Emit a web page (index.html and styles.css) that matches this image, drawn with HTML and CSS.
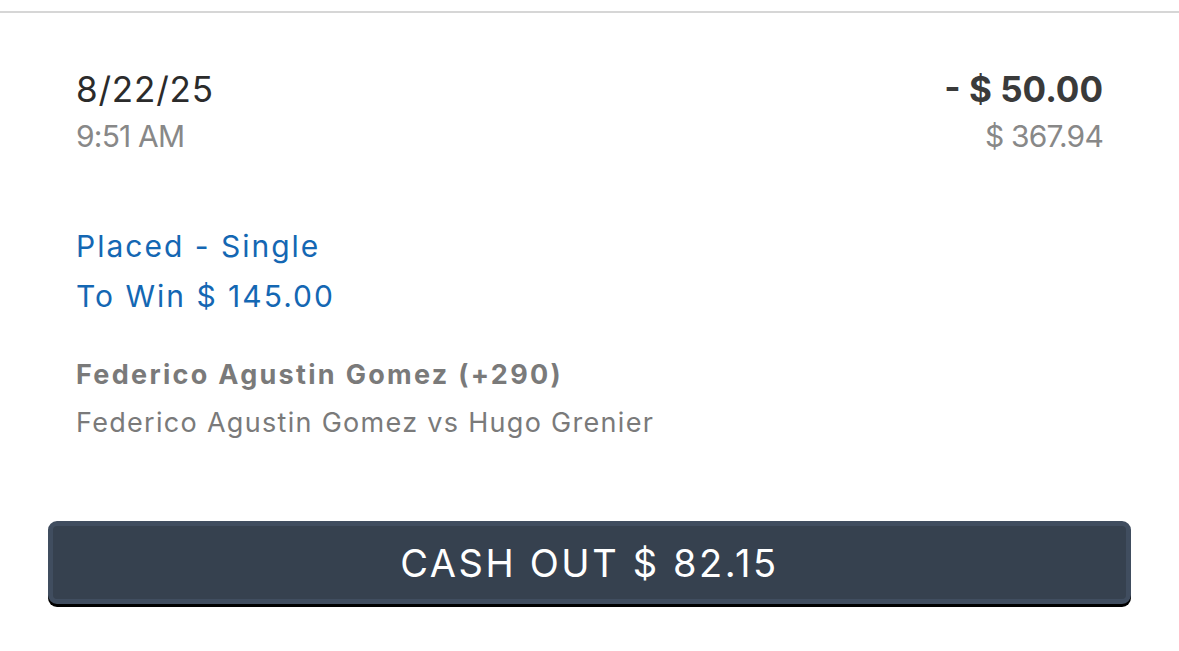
FILE: index.html
```html
<!DOCTYPE html>
<html lang="en">
<head>
  <meta charset="UTF-8">
  <meta name="viewport" content="width=device-width, initial-scale=1.0">
  <title>Bet Details</title>
  <link rel="stylesheet" href="styles.css">
</head>
<body>
  <div class="bet-card">
    <!-- Дата та сума -->
    <div class="bet-header">
      <div class="bet-when">
        <div class="bet-date">8/22/25</div>
        <div class="bet-time">9:51 AM</div>
      </div>
      <div class="bet-amounts">
        <div class="bet-stake">- $ 50.00</div>
        <div class="bet-balance">$ 367.94</div>
      </div>
    </div>

    <div class="bet-status">
      <div>Placed - Single</div>
      <div>To Win $ 145.00</div>
    </div>

    <div class="bet-selection">
      <div class="selection-name">Federico Agustin Gomez (+290)</div>
      <div class="selection-event">Federico Agustin Gomez vs Hugo Grenier</div>
    </div>

    <button class="cashout-button">CASH OUT $ 82.15</button>
  </div>
</body>
</html>
```

FILE: styles.css
```css
* {
  margin: 0;
  padding: 0;
  box-sizing: border-box;
}

body {
  font-family: Inter, "Noto Sans", Arial, sans-serif;
  background: white;
  width: 1179px;
  height: 651px;
  overflow: hidden;
}

.bet-card {
  border-top: 2px solid #d6d6d6;
  margin-top: 11px;
  padding: 56px 48px 0;
}

.bet-header {
  display: flex;
  justify-content: space-between;
  padding: 0 28px;
}

.bet-date {
  font-size: 35px;
  line-height: 40px;
  letter-spacing: 0.8px;
  color: #2b2b2b;
}

.bet-time, .bet-balance {
  font-size: 30px;
  line-height: 36px;
  letter-spacing: -0.8px;
  color: #888;
  margin-top: 9px;
}

.bet-amounts {
  text-align: right;
}

.bet-stake {
  font-size: 35px;
  line-height: 40px;
  font-weight: 700;
  color: #3a3a3a;
}

.bet-status {
  margin-top: 67px;
  padding: 0 28px;
  font-size: 30px;
  line-height: 50px;
  letter-spacing: 2px;
  color: #1467b3;
}

.bet-selection {
  margin-top: 30px;
  padding: 0 28px;
  font-size: 27px;
  line-height: 48px;
  color: #7a7a7a;
}

.selection-name {
  font-weight: 700;
  letter-spacing: 2.3px;
}

.selection-event {
  letter-spacing: 1.3px;
}

.cashout-button {
  display: flex;
  justify-content: center;
  align-items: center;
  width: 100%;
  height: 83px;
  margin-top: 74px;
  background: #36414f;
  border: 5px solid #404d5f;
  border-radius: 9px;
  box-shadow: 0 3px 0 #000;
  color: white;
  font-family: inherit;
  font-size: 38px;
  letter-spacing: 2.6px;
}
```
